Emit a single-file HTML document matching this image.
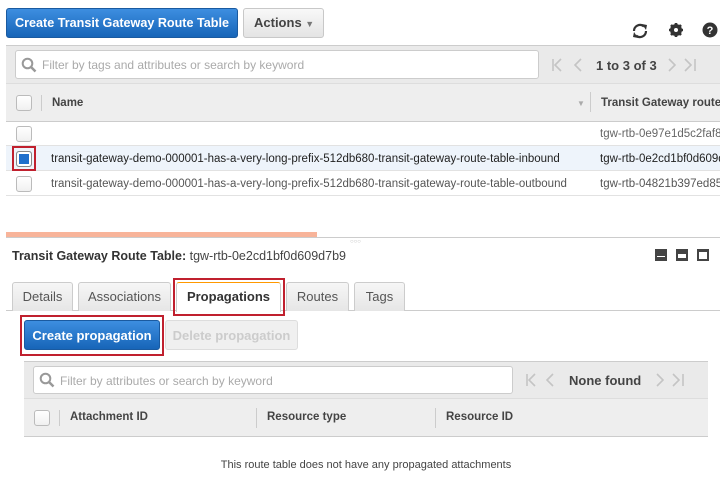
<!DOCTYPE html>
<html><head><style>
*{box-sizing:border-box;margin:0;padding:0}
body{width:720px;height:486px;overflow:hidden;background:#fff;font-family:"Liberation Sans",Arial,sans-serif;font-size:12px;color:#444;position:relative}
.a{position:absolute}
.btnb{background:linear-gradient(#3d8ee0,#1765b8);border:1px solid #1a5aa0;border-radius:3px;color:#fff;font-weight:bold;font-size:13px;text-align:center}
.btng{background:linear-gradient(#f8f8f8,#e4e4e4);border:1px solid #c8c8c8;border-radius:3px;color:#444;font-weight:bold;font-size:13px}
.cb{position:absolute;width:16px;height:16px;border:1px solid #bbb;border-radius:3px;background:linear-gradient(#fff,#f0f0f0)}
.inp{position:absolute;background:#fff;border:1px solid #ccc;border-radius:3px;color:#aaa;font-size:12px}
.tab{position:absolute;top:282px;height:29px;border:1px solid #ccc;border-bottom:none;background:linear-gradient(#f6f6f6,#e6e6e6);border-radius:3px 3px 0 0;font-size:13px;color:#555;text-align:center;line-height:28px}
.red{position:absolute;border:2px solid #c0202e}
.row{position:absolute;left:6px;width:714px;height:25px;border-bottom:1px solid #e2e2e2;font-size:11.5px;line-height:27px;white-space:nowrap;overflow:hidden}
</style></head><body>
<div class="a btnb" style="left:6px;top:8px;width:232px;height:30px;line-height:28px;font-size:12.6px">Create Transit Gateway Route Table</div>
<div class="a btng" style="left:243px;top:8px;width:81px;height:30px;line-height:28px;padding-left:10px">Actions <span style="font-size:9px;color:#777">&#9660;</span></div>
<svg class="a" style="left:630px;top:21px" width="90" height="20">
<g fill="none" stroke="#333" stroke-width="2.2"><path d="M4 10a6 6 0 0 1 10-4.5M16 10a6 6 0 0 1-10 4.5"/></g>
<path d="M12 3l5 1-1 5z M8 17l-5-1 1-5z" fill="#333"/>
<circle cx="46" cy="9" r="4.5" fill="none" stroke="#333" stroke-width="3"/>
<g stroke="#333" stroke-width="2.6"><path d="M46 2v14M39 9h14M41 4l10 10M51 4l-10 10"/></g>
<circle cx="46" cy="9" r="2" fill="#fff"/>
<circle cx="80" cy="9" r="7.5" fill="#333"/>
<text x="80" y="13" font-size="11" font-weight="bold" fill="#fff" text-anchor="middle" font-family="Liberation Sans">?</text>
</svg>
<div class="a" style="left:6px;top:45px;width:714px;height:39px;background:#eaeaea;border-top:1px solid #ccc;border-bottom:1px solid #ddd"></div>
<div class="inp" style="left:15px;top:50px;width:524px;height:29px;line-height:29px;padding-left:26px">Filter by tags and attributes or search by keyword</div>
<svg class="a" style="left:21px;top:57px" width="16" height="16"><circle cx="6.5" cy="6.5" r="4.8" fill="none" stroke="#999" stroke-width="2"/><path d="M10 10l4.5 4.5" stroke="#999" stroke-width="2.5"/></svg>
<svg class="a" style="left:551px;top:57px" width="36" height="16" fill="none" stroke="#c4c4c4" stroke-width="1.6"><path d="M2 2v12M10 2l-6 6 6 6M30 2l-6 6 6 6"/></svg>
<div class="a" style="left:596px;top:58px;font-weight:bold;font-size:13px;color:#444">1 to 3 of 3</div>
<svg class="a" style="left:665px;top:57px" width="36" height="16" fill="none" stroke="#c4c4c4" stroke-width="1.6"><path d="M4 2l6 6-6 6M20 2l6 6-6 6M30 2v12"/></svg>
<div class="a" style="left:6px;top:84px;width:714px;height:38px;background:#eeeeee;border-bottom:1px solid #ccc"></div>
<div class="cb" style="left:16px;top:95px"></div>
<div class="a" style="left:41px;top:95px;width:1px;height:16px;background:#ccc"></div>
<div class="a" style="left:52px;top:97px;font-weight:bold;font-size:11.5px;color:#444">Name</div>
<div class="a" style="left:577px;top:99px;font-size:8px;color:#aaa">&#9660;</div>
<div class="a" style="left:590px;top:92px;width:1px;height:20px;background:#ccc"></div>
<div class="a" style="left:601px;top:97px;font-weight:bold;font-size:11.5px;color:#444;white-space:nowrap">Transit Gateway route</div>
<div class="row" style="top:121px"><span class="a" style="left:594px;color:#666">tgw-rtb-0e97e1d5c2faf82</span></div>
<div class="row" style="top:146px;background:#eef4fb;color:#222"><span class="a" style="left:45px">transit-gateway-demo-000001-has-a-very-long-prefix-512db680-transit-gateway-route-table-inbound</span><span class="a" style="left:594px">tgw-rtb-0e2cd1bf0d609d</span></div>
<div class="row" style="top:171px;color:#555"><span class="a" style="left:45px">transit-gateway-demo-000001-has-a-very-long-prefix-512db680-transit-gateway-route-table-outbound</span><span class="a" style="left:594px">tgw-rtb-04821b397ed856</span></div>
<div class="cb" style="left:16px;top:126px"></div>
<div class="cb" style="left:16px;top:151px;background:#1f6fcc;border-color:#888;box-shadow:inset 0 0 0 2px #fff"></div>
<div class="red" style="left:12px;top:146px;width:24px;height:25px"></div>
<div class="cb" style="left:16px;top:176px"></div>
<div class="a" style="left:6px;top:232px;width:311px;height:5px;background:#f8b49a"></div>
<div class="a" style="left:6px;top:237px;width:714px;height:1px;background:#ccc"></div>
<div class="a" style="left:350px;top:239px;font-size:6px;color:#bbb">○○○</div>
<div class="a" style="left:12px;top:249px;font-size:12.5px"><b style="color:#333">Transit Gateway Route Table:</b> <span style="color:#444">tgw-rtb-0e2cd1bf0d609d7b9</span></div>
<div class="a" style="left:655px;top:249px;width:12px;height:12px;background:#444;border-bottom:3px solid #444"><div style="position:absolute;left:2px;right:2px;bottom:1px;height:1px;background:#fff"></div></div>
<div class="a" style="left:676px;top:249px;width:12px;height:12px;background:#444"><div style="position:absolute;left:2px;right:2px;top:5px;height:4px;background:#fff"></div></div>
<div class="a" style="left:697px;top:249px;width:12px;height:12px;background:#444"><div style="position:absolute;left:2px;right:2px;top:3px;bottom:2px;background:#fff"></div></div>
<div class="a" style="left:6px;top:310px;width:714px;height:1px;background:#ccc"></div>
<div class="tab" style="left:12px;width:61px">Details</div>
<div class="tab" style="left:78px;width:93px">Associations</div>
<div class="tab" style="left:176px;width:105px;height:30px;background:#fff;border-top:1px solid #f90;font-weight:bold;color:#333">Propagations</div>
<div class="tab" style="left:286px;width:63px">Routes</div>
<div class="tab" style="left:354px;width:51px">Tags</div>
<div class="red" style="left:173px;top:278px;width:112px;height:38px"></div>
<div class="a btnb" style="left:24px;top:320px;width:136px;height:30px;line-height:29px">Create propagation</div>
<div class="red" style="left:20px;top:315px;width:144px;height:41px"></div>
<div class="a btng" style="left:165px;top:320px;width:133px;height:30px;line-height:29px;text-align:center;color:#ccc;background:#f0f0f0;border-color:#ddd">Delete propagation</div>
<div class="a" style="left:24px;top:361px;width:684px;height:38px;background:#eaeaea;border-top:1px solid #ccc;border-bottom:1px solid #ddd"></div>
<div class="inp" style="left:33px;top:366px;width:480px;height:28px;line-height:28px;padding-left:26px">Filter by attributes or search by keyword</div>
<svg class="a" style="left:39px;top:372px" width="16" height="16"><circle cx="6.5" cy="6.5" r="4.8" fill="none" stroke="#999" stroke-width="2"/><path d="M10 10l4.5 4.5" stroke="#999" stroke-width="2.5"/></svg>
<svg class="a" style="left:525px;top:372px" width="36" height="16" fill="none" stroke="#c4c4c4" stroke-width="1.6"><path d="M2 2v12M10 2l-6 6 6 6M28 2l-6 6 6 6"/></svg>
<div class="a" style="left:569px;top:373px;font-weight:bold;font-size:13px;color:#444">None found</div>
<svg class="a" style="left:653px;top:372px" width="36" height="16" fill="none" stroke="#c4c4c4" stroke-width="1.6"><path d="M4 2l6 6-6 6M20 2l6 6-6 6M30 2v12"/></svg>
<div class="a" style="left:24px;top:399px;width:684px;height:38px;background:#eeeeee;border-bottom:1px solid #ccc"></div>
<div class="cb" style="left:34px;top:410px"></div>
<div class="a" style="left:59px;top:410px;width:1px;height:16px;background:#ccc"></div>
<div class="a" style="left:70px;top:411px;font-weight:bold;font-size:11.5px">Attachment ID</div>
<div class="a" style="left:256px;top:408px;width:1px;height:20px;background:#ccc"></div>
<div class="a" style="left:267px;top:411px;font-weight:bold;font-size:11.5px">Resource type</div>
<div class="a" style="left:435px;top:408px;width:1px;height:20px;background:#ccc"></div>
<div class="a" style="left:446px;top:411px;font-weight:bold;font-size:11.5px">Resource ID</div>
<div class="a" style="left:24px;top:459px;width:684px;text-align:center;font-size:11px;color:#444">This route table does not have any propagated attachments</div>
</body></html>
